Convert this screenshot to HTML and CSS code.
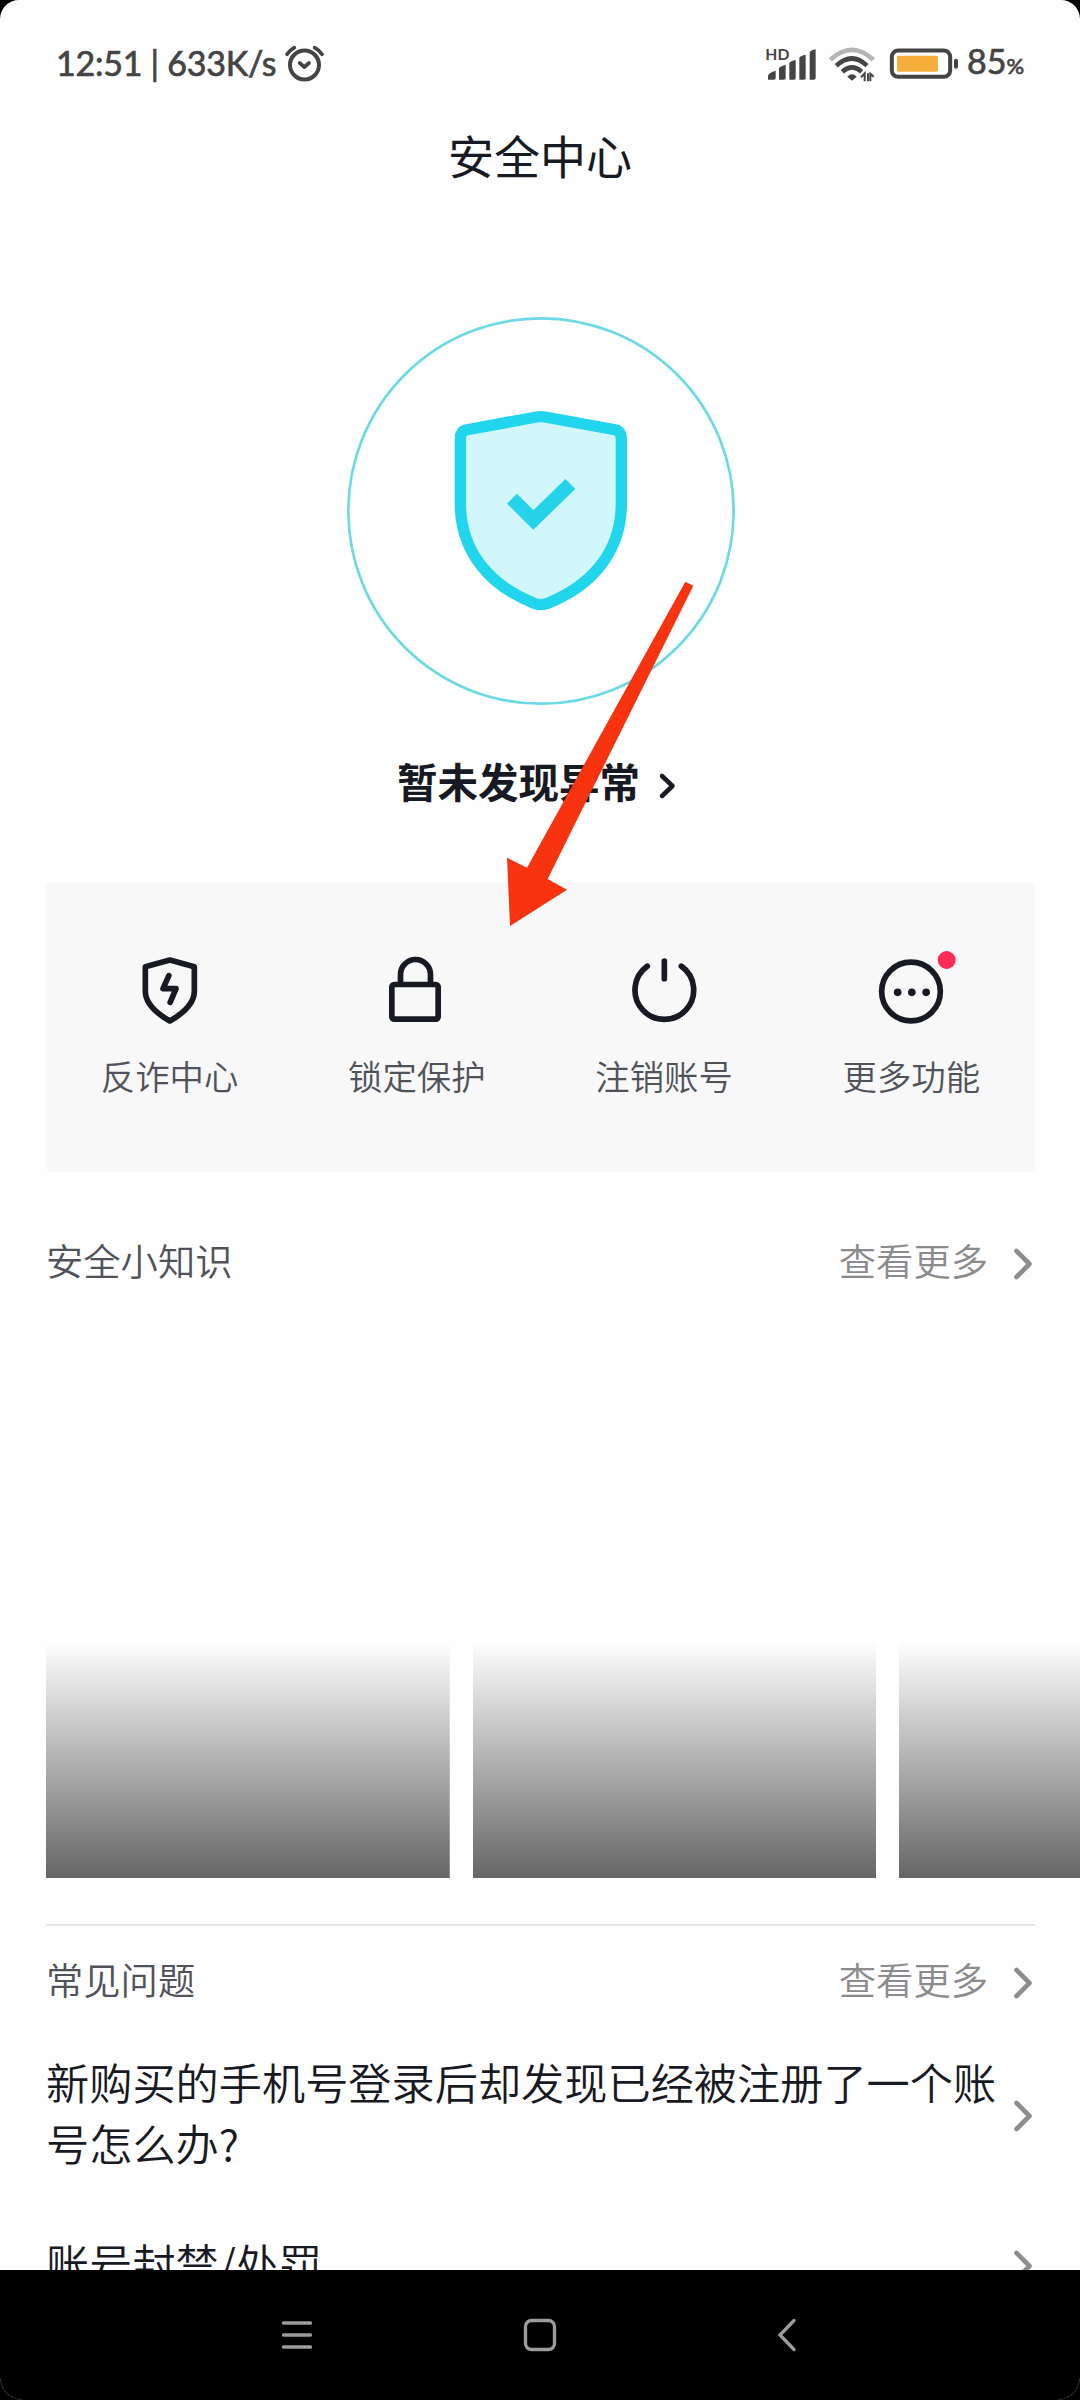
FILE: index.html
```html
<!DOCTYPE html>
<html lang="zh-CN">
<head>
<meta charset="utf-8">
<title>安全中心</title>
<link rel="stylesheet" href="styles.css">
</head>
<body>
<div class="screen">
  <main class="page">
    <div class="status-bar">
      <span class="status-time">12:51 | 633K/s</span>
      <svg class="alarm" viewBox="852 129 123 117" fill="none" stroke="#444" stroke-linecap="round">
        <circle cx="913.500" cy="192" r="43.500" stroke-width="12"/>
        <path d="M899 186l14 12 14-12" stroke-width="11" stroke-linejoin="round"/>
        <path d="M861 160q8-12 22-20M966 160q-8-12-22-20" stroke-width="11"/>
      </svg>
      <div class="status-right">
        <svg class="signal" viewBox="195 130 180 115" fill="#444">
          <text class="hd" x="196" y="177">HD</text>
          <path d="M204 237v-12q3-9 23-15v22q0 5-5 5zM237 237v-35q4-5 20-10v40q0 5-5 5zM268 237v-50q4-6 19-9v54q0 5-5 5zM298 237v-66q4-6 19-9v70q0 5-5 5zM329 237v-82q4-7 18-9v86q0 5-5 5z"/>
        </svg>
        <svg class="wifi" viewBox="375 130 180 115" fill="none" stroke="#444" stroke-width="14">
          <path d="M391 177Q456 118 520 177" stroke="#b4b4b4"/>
          <path d="M409 195Q456 152 501 195"/>
          <path d="M427 213Q456 187 485 213"/>
          <path d="M442 228Q456 214 470 228L456 240Z" fill="#444" stroke="none"/>
          <path d="M483 230L494 218V242M504 242V218M511 242V219L521 228" stroke-width="6"/>
        </svg>
        <svg class="battery" viewBox="555 130 240 115">
          <rect x="575.500" y="149.500" width="175" height="79" rx="19" fill="none" stroke="#444" stroke-width="12"/>
          <rect x="591" y="165" width="123" height="48" rx="5" fill="#f5ae3a"/>
          <rect x="762" y="174" width="12" height="30" rx="6" fill="#444"/>
        </svg>
        <span class="battery-level">85<small>%</small></span>
      </div>
    </div>

    <h1 class="title">安全中心</h1>

    <svg class="hero" viewBox="0 0 1320 1320">
      <circle cx="663" cy="663" r="578" fill="none" stroke="#6bdae3" stroke-width="8"/>
      <path d="M437 420L650 381Q662 379 675 381L889 420Q904 426 904 446V640C904 790 810 890 680 941Q662 947 645 941C515 890 421 790 421 640V446Q421 425 437 420Z" fill="#d1f7fa" stroke="#20d5ec" stroke-width="34" stroke-linejoin="round"/>
      <path d="M576 626L640 690L751 582" fill="none" stroke="#25d2ea" stroke-width="42"/>
    </svg>

    <div class="result">
      <span>暂未发现异常</span>
      <svg class="result-chevron" viewBox="0 0 20 30"><path d="M4 5L14.500 15 4 25"/></svg>
    </div>

    <section class="tools">
      <div class="tool">
        <svg class="tool-icon" viewBox="0 0 240 240">
          <path d="M119.500 30L193 50V124C193 160 160 190 119.500 213C79 190 46 160 46 124V50Z"/>
          <path d="M116.500 77L99 116H138L120.500 157"/>
        </svg>
        <span>反诈中心</span>
      </div>
      <div class="tool">
        <svg class="tool-icon" viewBox="0 0 240 240">
          <rect x="44.500" y="103.500" width="139" height="104" rx="7"/>
          <path d="M70.500 100V73.500a45 45 0 0 1 90 0V100"/>
        </svg>
        <span>锁定保护</span>
      </div>
      <div class="tool">
        <svg class="tool-icon" viewBox="0 0 240 240">
          <path d="M172 48.500A88 88 0 1 1 70 48.500M121 33V86"/>
        </svg>
        <span>注销账号</span>
      </div>
      <div class="tool">
        <svg class="tool-icon" viewBox="0 0 240 240">
          <circle cx="120" cy="124.500" r="88"/>
          <g stroke="none" fill="#171923"><circle cx="80" cy="127" r="11.500"/><circle cx="122.500" cy="127" r="11.500"/><circle cx="165.500" cy="127" r="11.500"/></g>
          <circle cx="227" cy="30" r="27" stroke="none" fill="#fe2c55"/>
        </svg>
        <span>更多功能</span>
      </div>
    </section>

    <div class="section-head tips-head">
      <span>安全小知识</span>
      <span class="more">查看更多</span>
      <svg class="chevron" viewBox="0 0 24 40"><path d="M5.500 7L18.500 20 5.500 33"/></svg>
    </div>
    <div class="tips">
      <div class="tip"></div>
      <div class="tip"></div>
      <div class="tip"></div>
    </div>

    <div class="divider"></div>

    <div class="section-head faq-head">
      <span>常见问题</span>
      <span class="more">查看更多</span>
      <svg class="chevron" viewBox="0 0 24 40"><path d="M5.500 7L18.500 20 5.500 33"/></svg>
    </div>
    <div class="question">
      <p>新购买的手机号登录后却发现已经被注册了一个账号怎么办?</p>
      <svg class="chevron" viewBox="0 0 24 40"><path d="M5.500 7L18.500 20 5.500 33"/></svg>
    </div>
    <div class="question">
      <p>账号封禁/处罚</p>
      <svg class="chevron" viewBox="0 0 24 40"><path d="M5.500 7L18.500 20 5.500 33"/></svg>
    </div>
  </main>

  <nav class="nav-bar">
    <svg class="nav-icon" viewBox="0 0 40 40"><path d="M6.500 8H33.500M6.500 20H33.500M6.500 32H33.500"/></svg>
    <svg class="nav-icon nav-home" viewBox="0 0 40 40"><rect x="5.500" y="5.500" width="29" height="29" rx="6"/></svg>
    <svg class="nav-icon" viewBox="0 0 40 40"><path d="M27 5.500L13 20 27 34.500"/></svg>
    <i class="corner corner-left"></i>
    <i class="corner corner-right"></i>
  </nav>

  <svg class="arrow" viewBox="0 0 1020 1140"><path d="M916 65L940 77L503 957L561 989L390 1098L381 893L441 923Z" fill="#f73310"/></svg>
</div>
</body>
</html>
```
FILE: styles.css
```css
* {
  box-sizing: border-box;
}

body {
  margin: 0;
  background: #000;
  font-family: "Noto Sans CJK SC", sans-serif;
  color: #171923;
}

svg {
  display: block;
  flex: none;
}

.screen {
  position: relative;
  width: 1080px;
  height: 2400px;
  overflow: hidden;
}

.page {
  height: 2270px;
  overflow: hidden;
  background: #fefefe;
  border-radius: 19px 19px 0 0;
}

/* Status bar */
.status-bar {
  display: flex;
  align-items: center;
  height: 126px;
  padding: 0 54px 0 56px;
  font-family: Lato, sans-serif;
  color: #444;
}

.status-time {
  width: 228px;
  font-size: 34px;
  letter-spacing: -0.25px;
  line-height: 40px;
  white-space: nowrap;
  -webkit-text-stroke: 0.7px #444;
}

.alarm {
  width: 41px;
  height: 39px;
}

.status-right {
  display: flex;
  align-items: center;
  margin-left: 440px;
}

.signal,
.wifi {
  width: 60px;
  height: 38.33px;
}

.battery {
  width: 80px;
  height: 38.33px;
}

.hd {
  font: 700 47px Lato, sans-serif;
}

.battery-level {
  margin-left: 2px;
  font-size: 34px;
  line-height: 40px;
  white-space: nowrap;
  -webkit-text-stroke: 0.7px #444;
}

.battery-level small {
  font-size: 22px;
}

/* Header and result */
.title {
  margin: 2px 0 0;
  font-size: 46px;
  font-weight: 400;
  line-height: 53px;
  text-align: center;
}

.hero {
  width: 440px;
  height: 440px;
  margin: 109px 0 0 320px;
}

.result {
  display: flex;
  align-items: center;
  justify-content: center;
  gap: 18px;
  height: 60px;
  margin-top: 20px;
  padding-right: 5px;
  font-size: 40.5px;
  font-weight: 700;
}

.result-chevron {
  width: 20px;
  height: 30px;
  margin-top: 11px;
  fill: none;
  stroke: #171923;
  stroke-width: 4.5;
  stroke-linecap: round;
  stroke-linejoin: round;
}

/* Tools */
.tools {
  display: grid;
  grid-template-columns: repeat(4, 1fr);
  height: 290px;
  margin: 72px 45px 0 46px;
  padding-top: 68px;
  background: #f8f8f8;
  border-radius: 5px;
}

.tool {
  display: flex;
  flex-direction: column;
  align-items: center;
  gap: 20px;
  font-size: 34.4px;
  font-weight: 350;
  line-height: 50px;
  color: #50525a;
}

.tool-icon {
  width: 80px;
  height: 80px;
  overflow: visible;
  fill: none;
  stroke: #171923;
  stroke-width: 17;
  stroke-linecap: round;
  stroke-linejoin: round;
}

/* Sections */
.section-head {
  display: flex;
  align-items: center;
  height: 60px;
  padding: 0 45px 0 46px;
  font-size: 37.3px;
  font-weight: 350;
  color: #50525a;
}

.tips-head {
  margin-top: 58px;
}

.faq-head {
  margin-top: 23px;
}

.more {
  margin-left: auto;
  margin-right: 23px;
  color: #8b8b8d;
}

.chevron {
  width: 24px;
  height: 40px;
  margin-top: 8px;
  fill: none;
  stroke: #8d8d8f;
  stroke-width: 4.6;
  stroke-linecap: round;
  stroke-linejoin: round;
}

.tips {
  display: flex;
  gap: 23px;
  height: 568px;
  margin: 20px 0 46px;
  padding-left: 46px;
  overflow: hidden;
}

.tip {
  flex: none;
  width: 403.5px;
  background: linear-gradient(transparent, rgba(0, 0, 0, 0.6)) bottom / 100% 236px no-repeat;
}

.divider {
  height: 2px;
  margin: 0 45px 0 46px;
  background: #e6e6e6;
}

.question {
  display: flex;
  align-items: center;
  justify-content: space-between;
  margin-top: 42px;
  padding: 0 45px 0 46px;
  font-size: 43.2px;
  font-weight: 350;
  line-height: 60.5px;
}

.question + .question {
  margin-top: 60px;
}

.question p {
  width: 954px;
  margin: 0;
}

/* System navigation */
.nav-bar {
  position: relative;
  display: flex;
  justify-content: space-between;
  height: 130px;
  padding: 45px 273px 0 277px;
  background: #000;
}

.nav-icon {
  width: 40px;
  height: 40px;
  fill: none;
  stroke: #9c9c9c;
  stroke-width: 3.3;
  stroke-linecap: round;
}

.nav-home {
  margin-right: 4px;
}

.corner {
  position: absolute;
  bottom: 0;
  width: 22px;
  height: 22px;
  border-bottom: 1px solid #2c2c2c;
}

.corner-left {
  left: 0;
  border-left: 1px solid #2c2c2c;
  border-bottom-left-radius: 22px;
}

.corner-right {
  right: 0;
  border-right: 1px solid #2c2c2c;
  border-bottom-right-radius: 22px;
}

/* Pointer drawn over the page */
.arrow {
  position: absolute;
  left: 380px;
  top: 560px;
  width: 340px;
  height: 380px;
}
```
